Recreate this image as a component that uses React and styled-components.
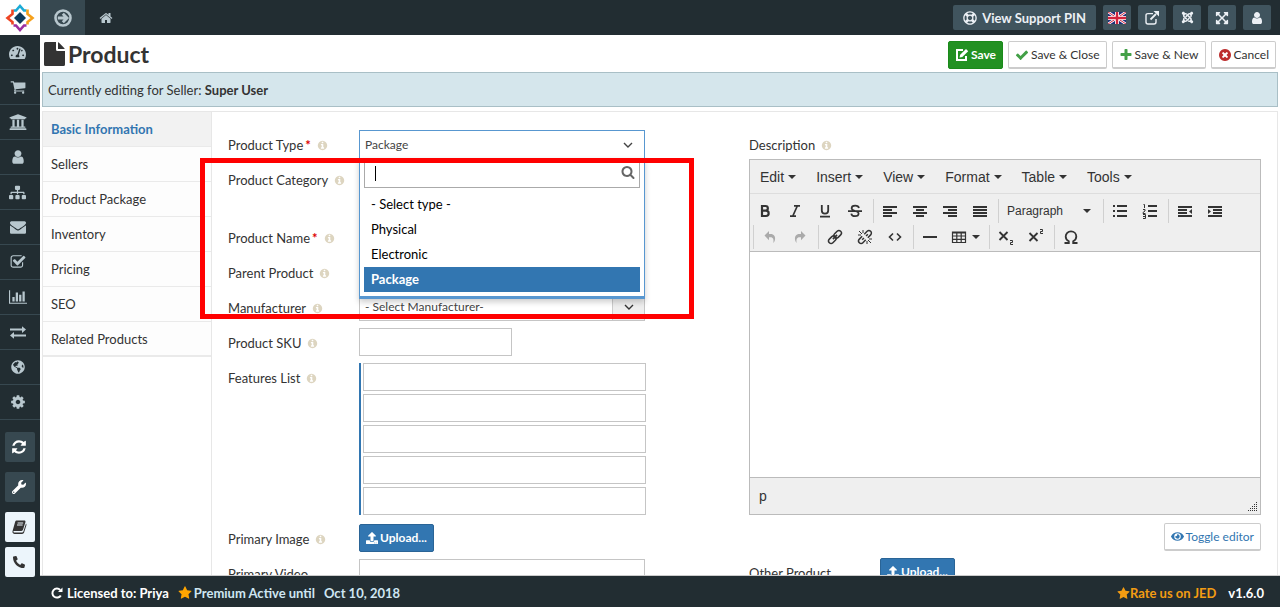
import React, { useState } from "react";
import styled, { createGlobalStyle, css } from "styled-components";
import {
  FaTachometerAlt,
  FaUniversity,
  FaSitemap,
  FaGlobeAmericas,
  FaWrench,
  FaPhoneAlt,
  FaJoomla,
  FaExpandArrowsAlt,
  FaRegLifeRing,
  FaUpload,
  FaEye,
} from "react-icons/fa";

const GlobalStyle = createGlobalStyle`
  * {
    box-sizing: border-box;
  }

  body {
    margin: 0;
    font-family: Lato, "Liberation Sans", sans-serif;
    font-size: 13px;
    line-height: 20px;
    color: #333;
    background: #fff;
  }

  button, input, select {
    font: inherit;
    color: inherit;
    margin: 0;
  }

  button {
    cursor: pointer;
  }

  a {
    color: inherit;
    text-decoration: none;
  }

  svg {
    display: block;
    flex: none;
  }
`

/* ---------- icons ---------- */

const paths = {
  home: "M1472 992v480q0 26-19 45t-45 19h-384v-384h-256v384h-384q-26 0-45-19t-19-45v-480q0-1 .5-3t.5-3l575-474 575 474q1 2 1 6zm223-69l-62 74q-8 9-21 11h-3q-13 0-21-7l-692-577-692 577q-12 8-24 7-13-2-21-11l-62-74q-8-10-7-23.5t11-21.5l719-599q32-26 76-26t76 26l244 204v-195q0-14 9-23t23-9h192q14 0 23 9t9 23v408l219 182q10 8 11 21.5t-7 23.5z",
  user: "M1536 1399q0 109-62.5 187t-150.5 78h-854q-88 0-150.5-78t-62.5-187q0-85 8.5-160.5t31.5-152 58.5-131 94-89 134.5-34.5q131 128 313 128t313-128q76 0 134.5 34.5t94 89 58.5 131 31.5 152 8.5 160.5zm-256-887q0 159-112.5 271.5t-271.5 112.5-271.5-112.5-112.5-271.5 112.5-271.5 271.5-112.5 271.5 112.5 112.5 271.5z",
  cart: "M704 1536q0 52-38 90t-90 38-90-38-38-90 38-90 90-38 90 38 38 90zm896 0q0 52-38 90t-90 38-90-38-38-90 38-90 90-38 90 38 38 90zm128-1088v512q0 24-16.5 42.5t-40.5 21.5l-1044 122q13 60 13 70 0 16-24 64h920q26 0 45 19t19 45-19 45-45 19h-1024q-26 0-45-19t-19-45q0-11 8-31.5t16-36 21.5-40 15.5-29.5l-177-823h-204q-26 0-45-19t-19-45 19-45 45-19h256q16 0 28.5 6.5t19.5 15.5 13 24.5 8 26 5.5 29.5 4.5 26h1201q26 0 45 19t19 45z",
  envelope: "M1792 710v794q0 66-47 113t-113 47h-1472q-66 0-113-47t-47-113v-794q44 49 101 87 362 246 497 345 57 42 92.5 65.5t94.5 48 110 24.5h2q51 0 110-24.5t94.5-48 92.5-65.5q170-123 498-345 57-39 100-87zm0-294q0 79-49 151t-122 123q-376 261-468 325-10 7-42.5 31t-54 38.5-52 32.5-57.5 27-50 9h-2q-23 0-50-9t-57.5-27-52-32.5-54-38.5-42.5-31q-91-64-262-182.5t-205-142.5q-62-42-117-115.5t-55-136.5q0-78 41.5-130t118.5-52h1472q65 0 112.5 47t47.5 113z",
  checkSquare: "M1472 930v318q0 119-84.5 203.5t-203.5 84.5h-832q-119 0-203.5-84.5t-84.5-203.5v-832q0-119 84.5-203.5t203.5-84.5h832q63 0 117 25 15 7 18 23 3 17-9 29l-49 49q-10 10-23 10-3 0-9-2-23-6-45-6h-832q-66 0-113 47t-47 113v832q0 66 47 113t113 47h832q66 0 113-47t47-113v-254q0-13 9-22l64-64q10-10 23-10 6 0 12 3 20 8 20 29zm231-489l-814 814q-24 24-57 24t-57-24l-430-430q-24-24-24-57t24-57l110-110q24-24 57-24t57 24l263 263 647-647q24-24 57-24t57 24l110 110q24 24 24 57t-24 57z",
  cog: "M1152 896q0-106-75-181t-181-75-181 75-75 181 75 181 181 75 181-75 75-181zm512-109v222q0 12-8 23t-20 13l-185 28q-19 54-39 91 35 50 107 138 10 12 10 25t-9 23q-27 37-99 108t-94 71q-12 0-26-9l-138-108q-44 23-91 38-16 136-29 186-7 28-36 28h-222q-14 0-24.5-8.5t-11.5-21.5l-28-184q-49-16-90-37l-141 107q-10 9-25 9-14 0-25-11-126-114-165-168-7-10-7-23 0-12 8-23 15-21 51-66.5t54-70.5q-27-50-41-99l-183-27q-13-2-21-12.5t-8-23.5v-222q0-12 8-23t19-13l186-28q14-46 39-92-40-57-107-138-10-12-10-24 0-10 9-23 26-36 98.5-107.5t94.5-71.5q13 0 26 10l138 107q44-23 91-38 16-136 29-186 7-28 36-28h222q14 0 24.5 8.5t11.5 21.5l28 184q49 16 90 37l142-107q9-9 24-9 13 0 25 10 129 119 165 170 7 8 7 22 0 12-8 23-15 21-51 66.5t-54 70.5q26 50 41 98l183 28q13 2 21 12.5t8 23.5z",
  refresh: "M1639 1056q0 5-1 7-64 268-268 434.5t-478 166.5q-146 0-282.5-55t-243.5-157l-129 129q-19 19-45 19t-45-19-19-45v-448q0-26 19-45t45-19h448q26 0 45 19t19 45-19 45l-137 137q71 66 161 102t187 36q134 0 250-65t186-179q11-17 53-117 8-23 30-23h192q13 0 22.5 9.5t9.5 22.5zm25-800v448q0 26-19 45t-45 19h-448q-26 0-45-19t-19-45 19-45l138-138q-148-137-349-137-134 0-250 65t-186 179q-11 17-53 117-8 23-30 23h-199q-13 0-22.5-9.5t-9.5-22.5v-7q65-268 270-434.5t480-166.5q146 0 284 55.5t245 156.5l130-129q19-19 45-19t45 19 19 45z",
  info: "M1152 1376v-160q0-14-9-23t-23-9h-96v-512q0-14-9-23t-23-9h-320q-14 0-23 9t-9 23v160q0 14 9 23t23 9h96v320h-96q-14 0-23 9t-9 23v160q0 14 9 23t23 9h448q14 0 23-9t9-23zm-128-896v-160q0-14-9-23t-23-9h-192q-14 0-23 9t-9 23v160q0 14 9 23t23 9h192q14 0 23-9t9-23zm640 416q0 209-103 385.5t-279.5 279.5-385.5 103-385.5-103-279.5-279.5-103-385.5 103-385.5 279.5-279.5 385.5-103 385.5 103 279.5 279.5 103 385.5z",
  star: "M1728 647q0 22-26 48l-363 354 86 500q1 7 1 20 0 21-10.5 35.5t-30.5 14.5q-19 0-40-12l-449-236-449 236q-22 12-40 12-21 0-31.5-14.5t-10.5-35.5q0-6 2-20l86-500-364-354q-25-27-25-48 0-37 56-46l502-73 225-455q19-41 49-41t49 41l225 455 502 73q56 9 56 46z",
  plus: "M1600 736v192q0 40-28 68t-68 28h-416v416q0 40-28 68t-68 28h-192q-40 0-68-28t-28-68v-416h-416q-40 0-68-28t-28-68v-192q0-40 28-68t68-28h416v-416q0-40 28-68t68-28h192q40 0 68 28t28 68v416h416q40 0 68 28t28 68z",
  check: "M1671 566q0 40-28 68l-724 724-136 136q-28 28-68 28t-68-28l-136-136-362-362q-28-28-28-68t28-68l136-136q28-28 68-28t68 28l294 295 656-657q28-28 68-28t68 28l136 136q28 28 28 68z",
  times: "M1277 1122q0-26-19-45l-181-181 181-181q19-19 19-45 0-27-19-46l-90-90q-19-19-46-19-26 0-45 19l-181 181-181-181q-19-19-45-19-27 0-46 19l-90 90q-19 19-19 46 0 26 19 45l181 181-181 181q-19 19-19 45 0 27 19 46l90 90q19 19 46 19 26 0 45-19l181-181 181 181q19 19 45 19 27 0 46-19l90-90q19-19 19-46zm387-226q0 209-103 385.5t-279.5 279.5-385.5 103-385.5-103-279.5-279.5-103-385.5 103-385.5 279.5-279.5 385.5-103 385.5 103 279.5 279.5 103 385.5z",
  search: "M1216 832q0-185-131.5-316.5t-316.5-131.5-316.5 131.5-131.5 316.5 131.5 316.5 316.5 131.5 316.5-131.5 131.5-316.5zm512 832q0 52-38 90t-90 38q-54 0-90-38l-343-342q-179 124-399 124-143 0-273.5-55.5t-225-150-150-225-55.5-273.5 55.5-273.5 150-225 225-150 273.5-55.5 273.5 55.5 225 150 150 225 55.5 273.5q0 220-124 399l343 343q37 37 37 90z",
}

const Icon = ({ name, size = 16 }) => (
  <svg width={size} height={size} viewBox="0 0 1792 1792" fill="currentColor" aria-hidden="true">
    <path d={paths[name]} />
  </svg>
)

const Logo = () => (
  <svg width="30" height="30" viewBox="0 0 30 30" fill="none" strokeWidth="2.6" aria-hidden="true">
    <path d="M8.500 7.500H11L15 3l4 4.500h2.500" stroke="#1cabd6" />
    <path d="M22.500 6.500V11L27.500 15l-5 4v2.500" stroke="#f6a01a" />
    <path d="M8.500 22.500H11L15 27l4-4.500h2.500" stroke="#9b2fa0" />
    <path d="M7.500 6.500V11L2.500 15l5 4v2.500" stroke="#ee4423" />
    <path d="M15 9l6 6-6 6-6-6z" fill="#0d3a5c" />
  </svg>
)

const CircleArrow = () => (
  <svg width="18" height="18" viewBox="0 0 18 18" fill="none" stroke="currentColor" aria-hidden="true">
    <circle cx="9" cy="9" r="7.500" strokeWidth="2.600" />
    <path d="M3.800 9h9M8.800 4.700 13.100 9l-4.300 4.300" strokeWidth="2.800" />
  </svg>
)

const FileIcon = () => (
  <svg width="21" height="24" viewBox="0 0 21 24" fill="currentColor" aria-hidden="true">
    <path d="M1.500 0H12v7.500Q12 9 13.500 9H21v13.500Q21 24 19.500 24h-18Q0 24 0 22.500v-21Q0 0 1.500 0zM14 .300Q14.800.600 15.300 1.100L19.900 5.700Q20.400 6.200 20.700 7H14z" />
  </svg>
)

const SaveIcon = () => (
  <svg width="14" height="14" viewBox="0 0 14 14" fill="none" stroke="currentColor" aria-hidden="true">
    <path d="M8 2H2v10h9V8" strokeWidth="2" />
    <path d="M4.500 9.500 5.200 6.800 11 1l2.200 2.200L7.300 9z" fill="currentColor" stroke="none" />
  </svg>
)

const BarChart = () => (
  <svg width="18" height="16" viewBox="0 0 2048 1792" fill="currentColor" aria-hidden="true">
    <path d="M640 896v512h-256v-512h256zm384-512v1024h-256v-1024h256zm1024 1152v128h-2048v-1536h128v1408h1920zm-640-896v768h-256v-768h256zm384-384v1152h-256v-1152h256z" />
  </svg>
)

const Exchange = () => (
  <svg width="16" height="13" viewBox="0 0 16 13" fill="currentColor" aria-hidden="true">
    <path d="M0 2.6h12V.2L16 3.6 12 7V4.6H0zM16 8.4H4V6L0 9.4l4 3.4v-2.4h12z" />
  </svg>
)

const Book = () => (
  <svg width="15" height="14" viewBox="0 0 15 14" fill="currentColor" aria-hidden="true">
    <path d="M5 .6h7.4c.9 0 1.3.7 1 1.6l-2.300 7.400c-.3.9-.8 1.400-1.700 1.400H2.200c-.7 0-.9.5-.7.9.2.4.6.6 1.200.6h7.300c.7 0 1.100-.3 1.400-1l2.600-8c.5.5.6 1 .4 1.700l-2.300 7.300c-.3.900-1 1.400-2 1.400H2.700C1.300 13.900 0 12.700.5 11.300L3.100 2C3.400 1.100 4 .6 5 .6z" />
    <path d="M5.600 3h5.600M5 5h5.600" stroke="#ecf5fb" strokeWidth="1" />
  </svg>
)

const External = () => (
  <svg width="14" height="14" viewBox="0 0 14 14" fill="none" stroke="currentColor" aria-hidden="true">
    <path d="M8 2.600H3Q1 2.600 1 4.600V11Q1 13 3 13H9Q11 13 11 11V8" strokeWidth="1.400" />
    <path d="M5.500 8.500 11 3" strokeWidth="1.800" />
    <path d="M8.500 0H14V5.500z" fill="currentColor" stroke="none" />
  </svg>
)

const Flag = () => (
  <svg width="18" height="12" viewBox="0 0 18 12" aria-hidden="true">
    <path fill="#1f2f7a" d="M0 0h18v12H0z" />
    <path d="M0 0l18 12M18 0L0 12" stroke="#fff" strokeWidth="2.600" />
    <path d="M0 0l18 12M18 0L0 12" stroke="#d2233c" strokeWidth="1" />
    <path d="M9 0v12M0 6h18" stroke="#fff" strokeWidth="4" />
    <path d="M9 0v12M0 6h18" stroke="#d2233c" strokeWidth="2.400" />
  </svg>
)

const Reload = () => (
  <svg width="12" height="12" viewBox="0 0 12 12" fill="none" stroke="currentColor" strokeWidth="2" aria-hidden="true">
    <path d="M9.800 8.400A4.500 4.500 0 1 1 9.200 3" />
    <path d="M11.500.500V5H7z" fill="currentColor" stroke="none" />
  </svg>
)

const Chevron = () => (
  <svg width="10" height="6" viewBox="0 0 10 6" fill="none" stroke="currentColor" strokeWidth="1.400" aria-hidden="true">
    <path d="M1 1l4 4 4-4" />
  </svg>
)

const Caret = () => (
  <svg width="8" height="4" viewBox="0 0 8 4" fill="currentColor" aria-hidden="true">
    <path d="M0 0h8L4 4z" />
  </svg>
)

const Grip = () => (
  <svg width="10" height="10" viewBox="0 0 10 10" fill="#333" aria-hidden="true">
    {[0, 2, 4, 6, 8].map((y) =>
      [0, 2, 4, 6, 8].filter((x) => x + y >= 8).map((x) => (
        <rect key={`${x}-${y}`} x={x} y={y} width="1" height="1" />
      ))
    )}
  </svg>
)

const lines = (rows) => rows.map(([x, y, w]) => <path key={`${x}-${y}`} d={`M${x} ${y}h${w}v2h-${w}z`} />)

const stroke = { fill: "none", stroke: "currentColor" }

const glyphs = {
  Bold: <path {...stroke} strokeWidth="2.200" d="M5 3h3.500a2.300 2.300 0 0 1 0 4.700H5zM5 7.700h4a2.600 2.600 0 0 1 0 5.300H5z" />,
  Italic: <path {...stroke} strokeWidth="1.700" d="M7 2.800h6M3 13.200h6M10.300 3 5.800 13" />,
  Underline: <path {...stroke} strokeWidth="1.800" d="M4.800 2v5.500a3.200 3.200 0 0 0 6.400 0V2M3 13.700h10" />,
  Strikethrough: <path {...stroke} strokeWidth="1.700" d="M12 5c-.3-1.500-1.700-2.300-3.800-2.300S4.600 3.600 4.600 5.200c0 3.300 7 2.300 7 5.300 0 1.600-1.300 2.700-3.500 2.700S4.500 12.200 4.300 10.600M1 8.200h14" />,
  "Align left": lines([[1, 3, 14], [1, 6, 9], [1, 9, 14], [1, 12, 9]]),
  "Align center": lines([[1, 3, 14], [4, 6, 8], [1, 9, 14], [4, 12, 8]]),
  "Align right": lines([[1, 3, 14], [6, 6, 9], [1, 9, 14], [6, 12, 9]]),
  Justify: lines([[1, 3, 14], [1, 6, 14], [1, 9, 14], [1, 12, 14]]),
  "Bullet list": lines([[1, 2, 2], [5, 2, 10], [1, 7, 2], [5, 7, 10], [1, 12, 2], [5, 12, 10]]),
  "Numbered list": (
    <>
      {lines([[6, 2, 9], [6, 7, 9], [6, 12, 9]])}
      <path {...stroke} d="M1.500 1.500h1V5M1 6.500h2v1.500l-2 1.500v1h2.500M1 11.500h2.500v4H1M1 13.500h2" />
    </>
  ),
  "Decrease indent": <>{lines([[1, 3, 14], [1, 6, 9], [1, 9, 9], [1, 12, 14]])}<path d="M15 6v5l-3-2.500z" /></>,
  "Increase indent": <>{lines([[1, 3, 14], [6, 6, 9], [6, 9, 9], [1, 12, 14]])}<path d="M1 6v5l3-2.500z" /></>,
  Undo: <path d="M2.500 6.500 7 2v3h1.500C12 5 13.500 7.500 13 10.500c-.2 1.500-.8 2.700-1.700 3.500C12 10.500 11.200 8.200 8.500 8.200H7v3z" />,
  Redo: <path d="M13.500 6.500 9 2v3H7.500C4 5 2.500 7.500 3 10.500c.2 1.500.8 2.700 1.700 3.500C4 10.500 4.800 8.200 7.500 8.200H9v3z" />,
  Link: (
    <g {...stroke} strokeWidth="1.500" transform="rotate(-45 8 8)">
      <rect x="0" y="5.500" width="8.500" height="5" rx="2.500" />
      <rect x="7.500" y="5.500" width="8.500" height="5" rx="2.500" />
      <path d="M5 8h6" />
    </g>
  ),
  Unlink: (
    <g {...stroke} strokeWidth="1.500">
      <g transform="rotate(-45 8 8)">
        <path d="M6.500 5.500H2.500a2.500 2.500 0 0 0 0 5h4M9.500 5.500h4a2.500 2.500 0 0 1 0 5h-4M4 8h2.500M9.500 8H12" />
      </g>
      <path strokeWidth="1" d="M2 2l3 3M6 1v3M1 6h3M14 14l-3-3M10 15v-3M15 10h-3" />
    </g>
  ),
  Code: <path {...stroke} strokeWidth="1.600" d="M6 4.500 2.500 8 6 11.500M10 4.500 13.500 8 10 11.500" />,
  Rule: <path d="M1 7h14v2H1z" />,
  Table: <path {...stroke} strokeWidth="1.200" d="M1.500 3h13v10.500h-13zM1.500 4h13M1.500 7h13M1.500 10.300h13M5.800 3v10.500M10.200 3v10.500" />,
  Subscript: (
    <g {...stroke}>
      <path strokeWidth="1.800" d="M1.500 3l8 8M9.500 3l-8 8" />
      <path d="M12 11.500h2.500v2h-2v2H15" />
    </g>
  ),
  Superscript: (
    <g {...stroke}>
      <path strokeWidth="1.800" d="M1.500 4l8 8M9.500 4l-8 8" />
      <path d="M12 .500h2.500v2h-2v2H15" />
    </g>
  ),
  "Special character": <path {...stroke} strokeWidth="1.800" d="M1.500 14h4.300v-1.800C3.700 11.200 2.700 9.500 2.700 7.500 2.700 4.500 5 2.300 8 2.300s5.300 2.200 5.300 5.200c0 2-1 3.700-3.100 4.700V14h4.300" />,
}

/* ---------- page shell ---------- */

const Page = styled.div`
  display: flex;
  flex-direction: column;
  height: 100vh;
  overflow: hidden;
`

const TopBar = styled.header`
  display: flex;
  align-items: center;
  flex: none;
  height: 35px;
  padding-right: 9px;
  background: #222d32;
  color: #b8c7ce;
`

const LogoLink = styled.a`
  display: flex;
  align-items: center;
  justify-content: center;
  width: 40px;
  height: 35px;
  background: #fff;
`

const MenuToggle = styled.button`
  display: flex;
  align-items: center;
  justify-content: center;
  width: 45px;
  height: 35px;
  padding: 0;
  border: 0;
  background: #374850;
  color: #b8c7ce;
`

const HomeLink = styled.a`
  padding: 0 14px;
`

const TopActions = styled.div`
  display: flex;
  gap: 7px;
  margin-left: auto;
`

const TopButton = styled.button`
  display: flex;
  align-items: center;
  justify-content: center;
  gap: 5px;
  min-width: 28px;
  height: 25px;
  padding: ${({ $wide }) => ($wide ? "0 10px" : 0)};
  border: 0;
  border-radius: 2px;
  background: #40545e;
  color: #ecf0f5;
  font-weight: bold;
`

const Middle = styled.div`
  display: flex;
  flex: 1;
  min-height: 0;
`

const Rail = styled.nav`
  position: relative;
  z-index: 1;
  flex: none;
  width: 40px;
  background: #222d32;
`

const RailLink = styled.a`
  display: flex;
  align-items: center;
  justify-content: center;
  height: 35px;
  padding-right: 5px;
  border-bottom: 1px solid #374850;
  color: #b8c7ce;
`

const RailTools = styled.div`
  display: flex;
  flex-direction: column;
  align-items: center;
  gap: 10px;
  padding-top: 12px;
`

const RailGroup = styled.div`
  display: grid;
  gap: 5px;
`

const RailButton = styled.button`
  display: flex;
  align-items: center;
  justify-content: center;
  width: 30px;
  height: 30px;
  padding: 0 2px 0 0;
  border: 0;
  border-radius: 2px;
  background: ${({ $light }) => ($light ? "#ecf5fb" : "#374850")};
  color: ${({ $light }) => ($light ? "#333" : "#fff")};
`

const Main = styled.main`
  display: flex;
  flex-direction: column;
  flex: 1;
  min-width: 0;
  padding: 0 2px;
  border-bottom: 1px solid #ccc;
  overflow: hidden;
`

const Footer = styled.footer`
  display: flex;
  align-items: center;
  flex: none;
  gap: 9px;
  height: 31px;
  padding: 3px 16px 0 51px;
  background: #222d32;
  color: #fff;
  font-weight: bold;
`

const FooterItem = styled.span`
  display: flex;
  align-items: center;
  gap: ${({ $gap = 0 }) => $gap}px;
  color: ${({ $color = "#fff" }) => $color};
`

const FooterRight = styled.div`
  display: flex;
  gap: 12px;
  margin-left: auto;
`

const Gold = styled.span`
  color: #ffa500;
`

/* ---------- heading ---------- */

const Heading = styled.div`
  display: flex;
  align-items: center;
  justify-content: space-between;
  flex: none;
  height: 37px;
  padding: 0 2px;
`

const Title = styled.h1`
  display: flex;
  align-items: center;
  gap: 3px;
  margin: 0;
  font-size: 23px;
  line-height: 36px;
`

const Actions = styled.div`
  display: flex;
  gap: 5px;
  padding-top: 3px;
`

const tones = {
  plain: css`
    border-color: #ccc;
    background: #fff;
    color: #333;
  `,
  save: css`
    border-color: #1a8a1a;
    background: #229122;
    color: #fff;
    font-weight: bold;
  `,
  primary: css`
    border-color: #2a6496;
    background: #3276b1;
    color: #fff;
    font-weight: bold;
  `,
  link: css`
    border-color: #ccc;
    background: #fff;
    color: #3276b1;
  `,
}

const Button = styled.button`
  display: inline-flex;
  align-items: center;
  gap: 2px;
  height: 28px;
  padding: 0 6px;
  border: 1px solid;
  border-bottom-width: ${({ $raised }) => ($raised ? 2 : 1)}px;
  border-radius: 2px;
  font-size: 12px;
  white-space: nowrap;
  ${({ $tone = "plain" }) => tones[$tone]}
`

const Tint = styled.span`
  color: ${({ $color }) => $color};
`

const Notice = styled.div`
  flex: none;
  padding: 7px 5px 6px;
  border: 1px solid #a9bfc6;
  background: #d5e6ec;
  margin-bottom: 4px;
`

/* ---------- panel ---------- */

const Panel = styled.div`
  position: relative;
  display: flex;
  flex: 1;
  border: 1px solid #e7e7e7;
  border-bottom: 0;
`

const Tabs = styled.nav`
  flex: none;
  width: 169px;
  border-right: 1px solid #e7e7e7;
`

const Tab = styled.a`
  display: block;
  height: 35px;
  padding: 7px 8px;
  border-bottom: 1px solid #eaeaea;
  background: ${({ $active }) => ($active ? "#f2f2f2" : "#fdfdfd")};
  color: ${({ $active }) => ($active ? "#3276b1" : "#333")};
  font-weight: ${({ $active }) => ($active ? "bold" : "normal")};

  &:last-child {
    border-bottom: 2px solid #eaeaea;
  }
`

const Form = styled.form`
  display: grid;
  grid-template-columns: 1fr 1fr;
  gap: 9px;
  flex: 1;
  align-items: start;
  padding: 18px 16px 0;
`

const Column = styled.div`
  display: flex;
  flex-direction: column;
  gap: 7px;
  min-width: 0;
`

const Row = styled.div`
  display: flex;
  align-items: flex-start;
  min-height: ${({ $tall }) => ($tall ? 51 : 28)}px;
  padding-bottom: ${({ $spaced }) => ($spaced ? 2 : 0)}px;
`

const Label = styled.label`
  display: flex;
  flex: none;
  align-items: center;
  width: 131px;
  padding-top: 5px;
`

const Required = styled.span`
  color: #d00;
  font-weight: bold;
  padding-left: 2px;
`

const Hint = styled.span`
  padding-left: 6px;
  color: #ddd5c0;
`

const TextInput = styled.input`
  width: ${({ $short }) => ($short ? 153 : 286)}px;
  height: 28px;
  padding: 0 6px;
  border: 1px solid #c5c5c5;
  background: #fff;
`

const FeatureList = styled.div`
  display: grid;
  gap: 3px;
  width: 287px;
  padding-left: 2px;
  border-left: 2px solid #3276b1;

  ${TextInput} {
    width: 100%;
  }
`

const SelectBox = styled.div`
  position: relative;
  width: 286px;
`

const NativeSelect = styled.select`
  display: block;
  width: 100%;
  height: 28px;
  padding: 0 5px;
  border: 1px solid #c5c5c5;
  border-radius: 0;
  background: #fff;
  color: #444;
  font-size: 12px;
  appearance: none;
`

const SelectArrow = styled.span`
  position: absolute;
  top: 1px;
  right: 1px;
  display: flex;
  align-items: center;
  justify-content: center;
  width: 32px;
  height: 26px;
  border-left: 1px solid #ccc;
  background: #eee;
  pointer-events: none;
`

const Combo = styled.button`
  display: flex;
  align-items: center;
  justify-content: space-between;
  width: 100%;
  height: 28px;
  padding: 0 11px 0 5px;
  border: 1px solid #5897d0;
  border-bottom: 0;
  background: #fff;
  color: #444;
  font-size: 12px;
`

const DropMenu = styled.div`
  position: absolute;
  z-index: 2;
  top: 28px;
  left: 0;
  width: 100%;
  padding: 2px 4px 4px;
  border: 1px solid #5897d0;
  border-top: 0;
  border-bottom-width: 3px;
  background: #fff;
  box-shadow: 0 3px 6px rgba(0, 0, 0, 0.2);
`

const SearchBox = styled.div`
  position: relative;
  color: #666;

  input {
    display: block;
    width: 100%;
    height: 28px;
    padding: 0 28px 0 11px;
    border: 1px solid #aaa;
    outline: 0;
  }

  svg {
    position: absolute;
    right: 5px;
    top: 5px;
  }
`

const TextCursor = styled.span`
  position: absolute;
  top: 6px;
  left: 11px;
  width: 1px;
  height: 15px;
  background: #000;
`

const Options = styled.ul`
  margin: 4px 0 0;
  padding: 0;
  list-style: none;
`

const Option = styled.li`
  height: 25px;
  padding: 2px 7px;
  color: ${({ $selected }) => ($selected ? "#fff" : "#000")};
  background: ${({ $selected }) => ($selected ? "#3276b1" : "transparent")};
  font-weight: ${({ $selected }) => ($selected ? "bold" : "normal")};
`

const Highlight = styled.div`
  position: absolute;
  z-index: 3;
  top: 46px;
  left: 157px;
  width: 494px;
  height: 161px;
  border: 5px solid #f00;
  pointer-events: none;
`

/* ---------- editor ---------- */

const Editor = styled.div`
  border: 1px solid #bbb;
  font-family: "Liberation Sans", sans-serif;
  font-size: 14px;
`

const MenuBar = styled.div`
  display: flex;
  height: 34px;
  border-bottom: 1px solid #ddd;
  background: #efefef;
`

const MenuButton = styled.button`
  display: flex;
  align-items: center;
  gap: 4px;
  padding: 0 10px;
  border: 0;
  background: none;
`

const Toolbar = styled.div`
  display: flex;
  flex-wrap: wrap;
  gap: 2px 0;
  padding: 5px 0 2px;
  border-bottom: 1px solid #bbb;
  background: #efefef;
`

const Group = styled.div`
  display: flex;
  margin-left: 3px;
  padding-left: 1px;
  border-left: 1px solid #d0d0d0;

  &:first-child {
    margin-left: 0;
    padding-left: 0;
    border: 0;
  }
`

const ToolButton = styled.button`
  display: flex;
  align-items: center;
  justify-content: ${({ $wide }) => ($wide ? "space-between" : "center")};
  gap: 5px;
  width: ${({ $wide }) => ($wide ? "100px" : "auto")};
  min-width: 30px;
  height: 24px;
  padding: ${({ $wide }) => ($wide ? "0 9px 0 7px" : "0 6px")};
  border: 0;
  background: none;
  font-size: 12px;

  &:disabled {
    color: #aaa;
  }
`

const EditArea = styled.div`
  height: 225px;
  outline: 0;
`

const StatusBar = styled.div`
  display: flex;
  align-items: center;
  justify-content: space-between;
  height: 37px;
  padding: 0 2px 0 9px;
  border-top: 1px solid #bbb;
  background: #efefef;

  svg {
    align-self: flex-end;
    margin-bottom: 2px;
  }
`

const DescriptionLabel = styled(Label)`
  width: auto;
  padding-bottom: 4px;
`

const Description = styled.div`
  display: flex;
  flex-direction: column;
`

const EditorFooter = styled.div`
  display: flex;
  justify-content: flex-end;
  padding-top: 8px;
`

const railLinks = [
  ["Dashboard", <FaTachometerAlt size={17} />],
  ["Orders", <Icon name="cart" />],
  ["Stores", <FaUniversity size={18} />],
  ["Users", <Icon name="user" />],
  ["Categories", <FaSitemap size={17} />],
  ["Messages", <Icon name="envelope" />],
  ["Tasks", <Icon name="checkSquare" />],
  ["Reports", <BarChart />],
  ["Transactions", <Exchange />],
  ["Locations", <FaGlobeAmericas size={14} />],
  ["Settings", <Icon name="cog" />],
]

const tabs = ["Basic Information", "Sellers", "Product Package", "Inventory", "Pricing", "SEO", "Related Products"]
const types = ["- Select type -", "Physical", "Electronic", "Package"]
const menus = ["Edit", "Insert", "View", "Format", "Table", "Tools"]
const toolGroups = [
  ["Bold", "Italic", "Underline", "Strikethrough"],
  ["Align left", "Align center", "Align right", "Justify"],
  ["Paragraph"],
  ["Bullet list", "Numbered list"],
  ["Decrease indent", "Increase indent"],
  ["Undo", "Redo"],
  ["Link", "Unlink", "Code"],
  ["Rule", "Table"],
  ["Subscript", "Superscript"],
  ["Special character"],
]

const Field = ({ label, id, required, noHint, children, ...rest }) => (
  <Row {...rest}>
    <Label htmlFor={id}>
      {label}
      {required && <Required>*</Required>}
      {!noHint && <Hint><Icon name="info" size={11} /></Hint>}
    </Label>
    {children}
  </Row>
)

const Tool = ({ name }) => {
  if (name === "Paragraph") {
    return <ToolButton type="button" $wide>Paragraph<Caret /></ToolButton>
  }
  return (
    <ToolButton type="button" aria-label={name} disabled={name === "Undo" || name === "Redo"}>
      <svg width="16" height="16" viewBox="0 0 16 16" fill="currentColor">{glyphs[name]}</svg>
      {name === "Table" && <Caret />}
    </ToolButton>
  )
}

const TypeSelect = () => {
  const [open, setOpen] = useState(true)
  const [value, setValue] = useState("Package")
  const pick = (type) => {
    setValue(type)
    setOpen(false)
  }
  return (
    <SelectBox>
      <Combo id="type" type="button" aria-haspopup="listbox" aria-expanded={open} onClick={() => setOpen(!open)}>
        {value}
        <Chevron />
      </Combo>
      {open && (
        <DropMenu>
          <SearchBox>
            <input type="text" aria-label="Search types" />
            <TextCursor />
            <Icon name="search" size={14} />
          </SearchBox>
          <Options role="listbox">
            {types.map((type) => (
              <Option key={type} role="option" aria-selected={type === value} $selected={type === value} onClick={() => pick(type)}>
                {type}
              </Option>
            ))}
          </Options>
        </DropMenu>
      )}
    </SelectBox>
  )
}

const RichEditor = () => (
  <Editor>
    <MenuBar>
      {menus.map((menu) => <MenuButton key={menu} type="button">{menu}<Caret /></MenuButton>)}
    </MenuBar>
    <Toolbar>
      {toolGroups.map((group) => (
        <Group key={group[0]}>
          {group.map((name) => <Tool key={name} name={name} />)}
        </Group>
      ))}
    </Toolbar>
    <EditArea id="description" contentEditable suppressContentEditableWarning role="textbox" aria-label="Description" />
    <StatusBar>p<Grip /></StatusBar>
  </Editor>
)

const App = () => (
  <Page>
    <GlobalStyle />
    <TopBar>
      <LogoLink href="#" aria-label="Control panel"><Logo /></LogoLink>
      <MenuToggle aria-label="Toggle menu"><CircleArrow /></MenuToggle>
      <HomeLink href="#" aria-label="Home"><Icon name="home" size={14} /></HomeLink>
      <TopActions>
        <TopButton $wide><FaRegLifeRing size={14} />View Support PIN</TopButton>
        <TopButton aria-label="Language"><Flag /></TopButton>
        <TopButton aria-label="Open site"><External /></TopButton>
        <TopButton aria-label="Joomla"><FaJoomla size={13} /></TopButton>
        <TopButton aria-label="Full screen"><FaExpandArrowsAlt size={14} /></TopButton>
        <TopButton aria-label="Account"><Icon name="user" size={14} /></TopButton>
      </TopActions>
    </TopBar>
    <Middle>
      <Rail>
        {railLinks.map(([name, icon]) => <RailLink key={name} href="#" aria-label={name}>{icon}</RailLink>)}
        <RailTools>
          <RailButton aria-label="Refresh"><Icon name="refresh" /></RailButton>
          <RailButton aria-label="Tools"><FaWrench size={14} /></RailButton>
          <RailGroup>
            <RailButton $light aria-label="Documentation"><Book /></RailButton>
            <RailButton $light aria-label="Support"><FaPhoneAlt size={12} /></RailButton>
          </RailGroup>
        </RailTools>
      </Rail>
      <Main>
        <Heading>
          <Title><FileIcon />Product</Title>
          <Actions>
            <Button $tone="save"><SaveIcon />Save</Button>
            <Button $raised><Tint $color="#43a047"><Icon name="check" size={14} /></Tint>Save &amp; Close</Button>
            <Button $raised><Tint $color="#43a047"><Icon name="plus" size={14} /></Tint>Save &amp; New</Button>
            <Button $raised><Tint $color="#bd2c2c"><Icon name="times" size={14} /></Tint>Cancel</Button>
          </Actions>
        </Heading>
        <Notice>Currently editing for Seller: <b>Super User</b></Notice>
        <Panel>
          <Tabs>
            {tabs.map((tab, i) => <Tab key={tab} href="#" $active={i === 0}>{tab}</Tab>)}
          </Tabs>
          <Form>
            <Column>
              <Field label="Product Type" id="type" required><TypeSelect /></Field>
              <Field label="Product Category" $tall />
              <Field label="Product Name" id="name" required><TextInput id="name" type="text" /></Field>
              <Field label="Parent Product" id="parent"><TextInput id="parent" type="text" /></Field>
              <Field label="Manufacturer" id="manufacturer">
                <SelectBox>
                  <NativeSelect id="manufacturer"><option>- Select Manufacturer-</option></NativeSelect>
                  <SelectArrow><Chevron /></SelectArrow>
                </SelectBox>
              </Field>
              <Field label="Product SKU" id="sku"><TextInput id="sku" type="text" $short /></Field>
              <Field label="Features List" id="feature-1" $spaced>
                <FeatureList>
                  {[1, 2, 3, 4, 5].map((n) => (
                    <TextInput key={n} id={`feature-${n}`} type="text" aria-label={`Feature ${n}`} />
                  ))}
                </FeatureList>
              </Field>
              <Field label="Primary Image" id="image">
                <Button id="image" type="button" $tone="primary"><FaUpload size={12} />Upload...</Button>
              </Field>
              <Field label="Primary Video" id="video" noHint><TextInput id="video" type="text" /></Field>
            </Column>
            <Column>
              <Description>
                <DescriptionLabel as="div">Description<Hint><Icon name="info" size={11} /></Hint></DescriptionLabel>
                <RichEditor />
                <EditorFooter>
                  <Button type="button" $tone="link" $raised><FaEye size={13} />Toggle editor</Button>
                </EditorFooter>
              </Description>
              <Field label="Other Product" id="other" noHint>
                <Button id="other" type="button" $tone="primary"><FaUpload size={12} />Upload...</Button>
              </Field>
            </Column>
          </Form>
          <Highlight />
        </Panel>
      </Main>
    </Middle>
    <Footer>
      <FooterItem $gap={4}><Reload />Licensed to: Priya</FooterItem>
      <FooterItem $color="#cfe6f2" $gap={2}><Gold><Icon name="star" size={14} /></Gold>Premium Active until</FooterItem>
      <FooterItem $color="#cfe6f2">Oct 10, 2018</FooterItem>
      <FooterRight>
        <FooterItem as="a" href="#" $color="#f39c12"><Icon name="star" size={13} />Rate us on JED</FooterItem>
        <FooterItem>v1.6.0</FooterItem>
      </FooterRight>
    </Footer>
  </Page>
)

export default App
